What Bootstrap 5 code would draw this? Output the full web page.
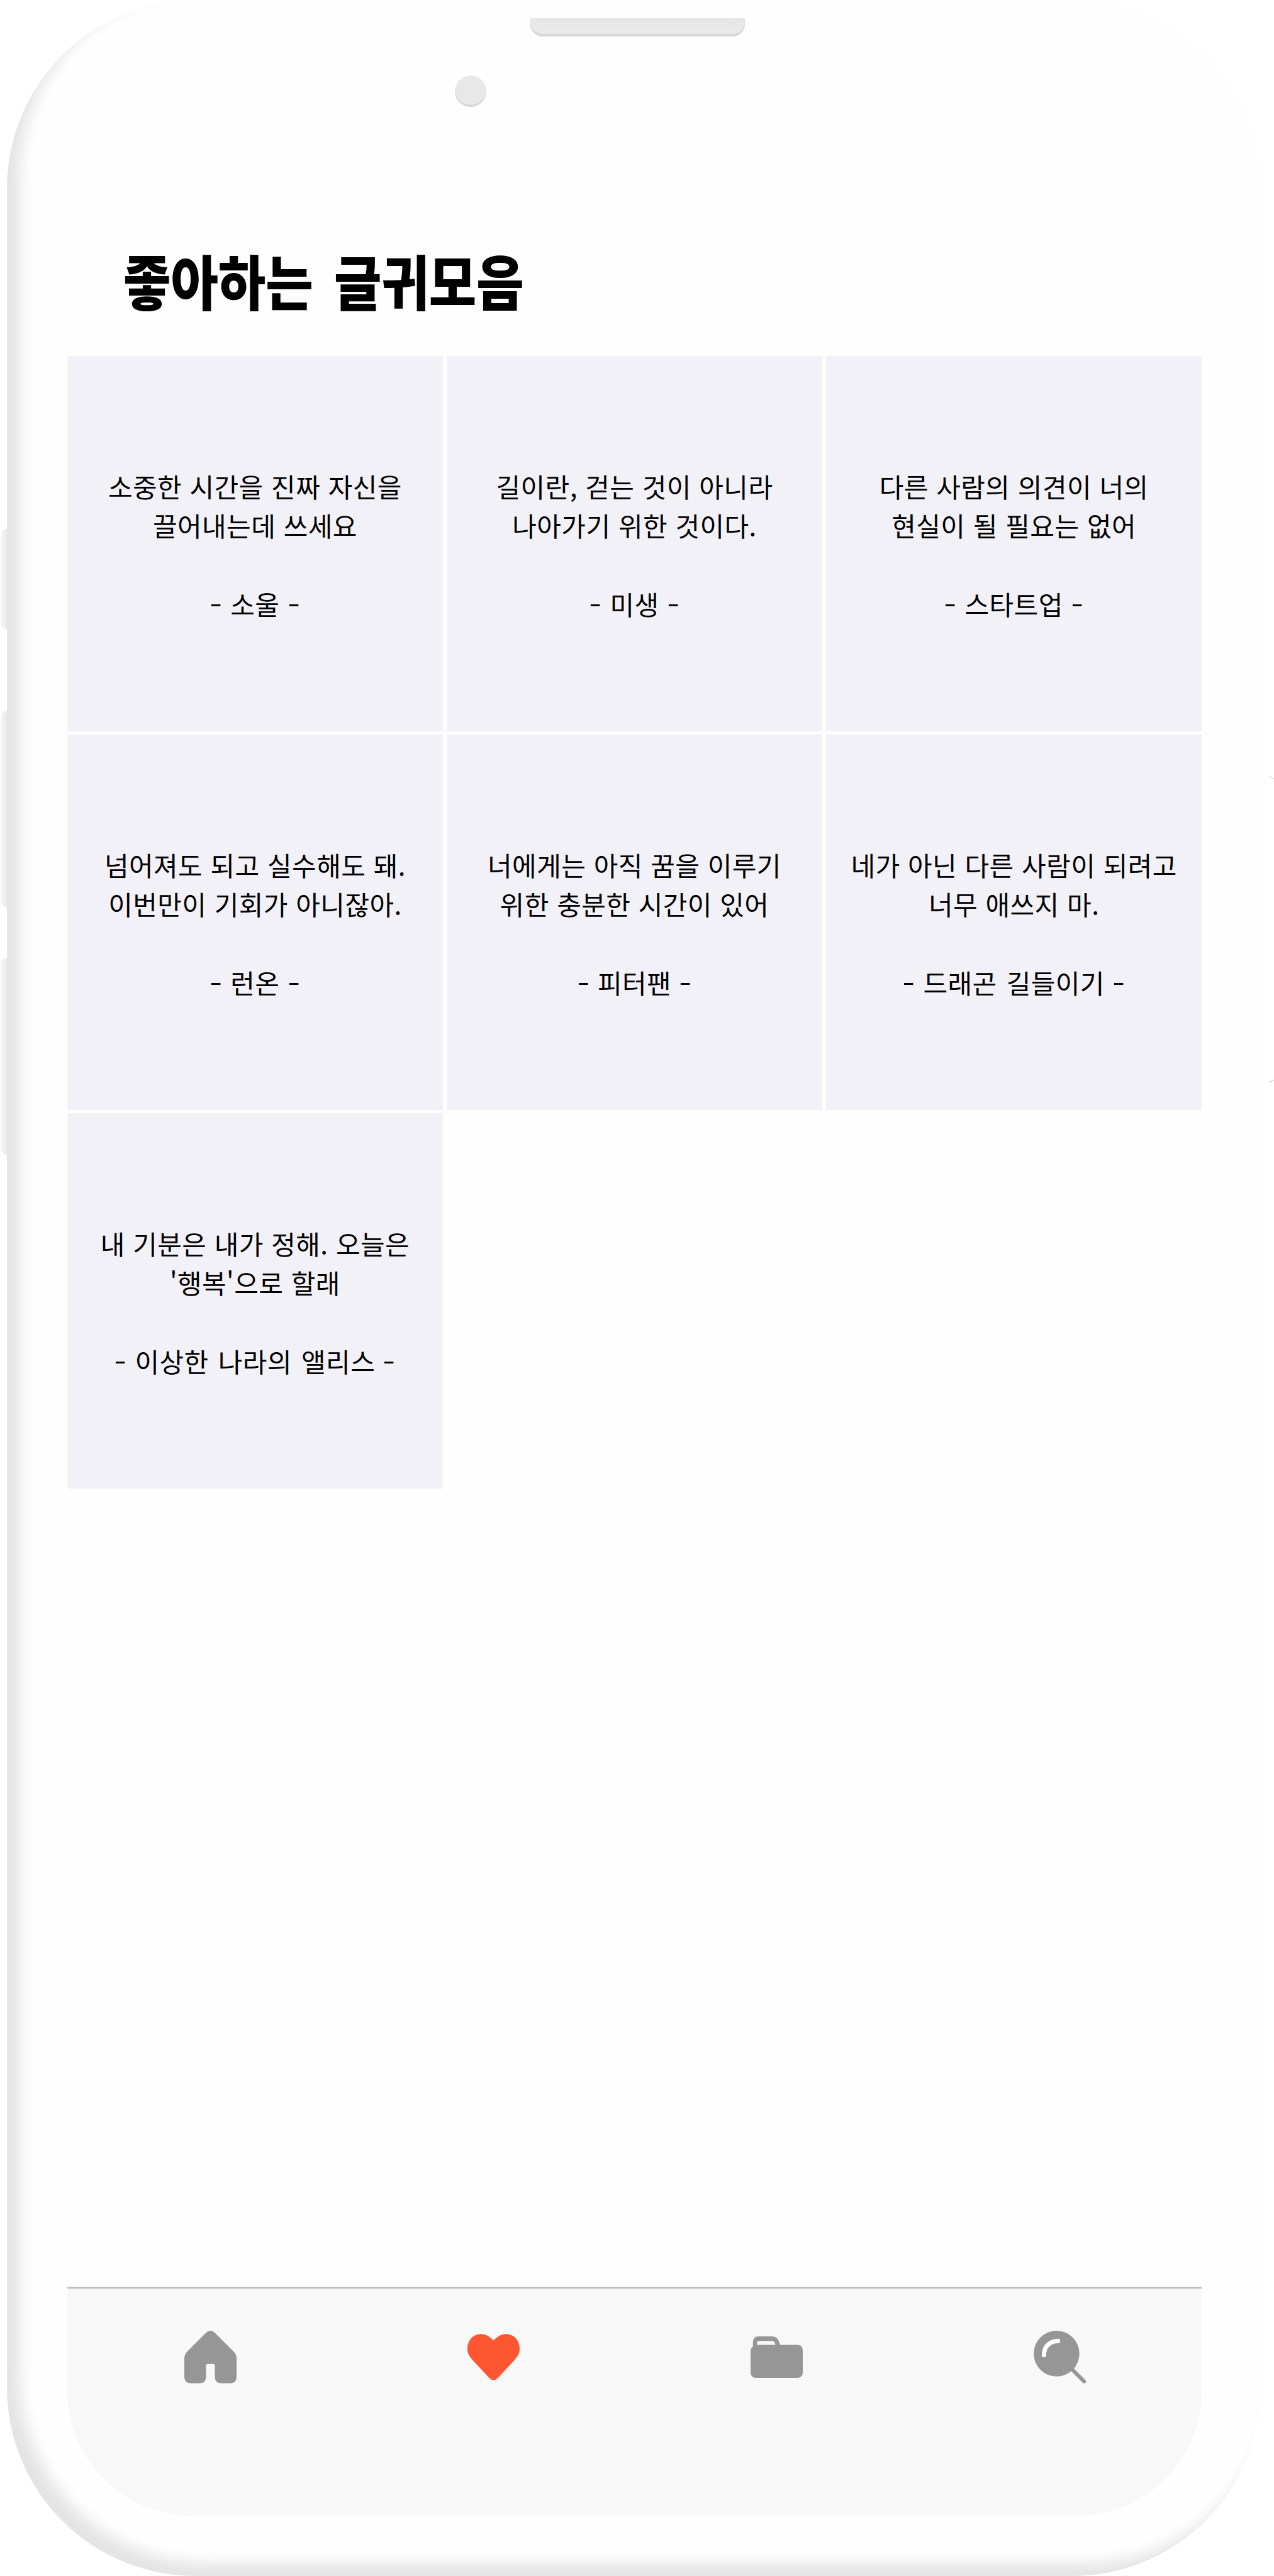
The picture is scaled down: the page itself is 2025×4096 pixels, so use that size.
<!DOCTYPE html>
<html lang="ko">
<head>
<meta charset="utf-8">
<meta name="viewport" content="width=device-width, initial-scale=1">
<title>좋아하는 글귀모음</title>
<link rel="stylesheet" href="https://cdn.jsdelivr.net/npm/bootstrap@5.3.0/dist/css/bootstrap.min.css">
<style>
  body { width: 2025px; height: 4096px; overflow: hidden; background: #fff; color: #000; font-family: "Noto Sans CJK KR", sans-serif; }
  .stage { width: 2025px; height: 4096px; padding-left: 11px; }
  .phone { width: 1993px; height: 4096px; padding: 98px 94px 96px 96px; border-radius: 300px; background: #fefefe;
           box-shadow: inset 20px -20px 22px #e4e4e4; }
  .screen { height: 3902px; border-radius: 0 0 198px 198px; background: #fefefe; }
  .side-key { left: 1px; width: 10px; border-radius: 10px 0 0 10px / 9px 0 0 9px; background: linear-gradient(90deg, #f6f6f6, #e9e9e9); }
  .key-a { top: 841px; height: 159px; }
  .key-b { top: 1130px; height: 312px; }
  .key-c { top: 1523px; height: 313px; }
  .power-key { left: 2017px; top: 1234px; width: 8px; height: 488px; }
  .speaker { left: 843px; top: 29px; width: 341px; height: 29px; border-radius: 0 0 20px 20px; background: linear-gradient(#e6e6e6, #ebebeb); box-shadow: inset 0 -4px 2px #d7d7d7; }
  .camera { left: 723px; top: 120px; width: 50px; height: 50px; background: #e8e8e8; box-shadow: inset 0 -3px 1px #d6d6d6; }
  .top-area { height: 468px; padding: 280px 0 0 89px; }
  .page-title { font-size: 95px; line-height: 134px; font-weight: 900; word-spacing: 12px; transform: scaleX(.863); transform-origin: left; }
  .quotes { display: grid; grid-template-columns: repeat(3, 1fr); grid-auto-rows: 597px; column-gap: 6.4px; row-gap: 5px; }
  .quote { background: #f2f1f7; font-size: 42px; line-height: 62.5px; letter-spacing: .4px; padding-top: 4px; }
  .quote-text { word-spacing: .3px; margin-bottom: 62.5px; }
  .quote-source { word-spacing: 3px; }
  .dash { display: inline-block; transform: scaleX(1.35); }
  .tabs { height: 364px; border-top: 3px solid #c0c0c0; background: #f8f8f8; border-radius: 0 0 198px 198px; padding: 67px 0 0 2px; color: #969696; }
  .tabs svg { width: 83px; height: 83px; overflow: visible; }
  .tab-on { color: #fd5631; }
</style>
<script src="https://cdn.jsdelivr.net/npm/bootstrap@5.3.0/dist/js/bootstrap.bundle.min.js"></script>
</head>
<body>
<div class="stage position-relative">
  <i class="side-key key-a position-absolute"></i>
  <i class="side-key key-b position-absolute"></i>
  <i class="side-key key-c position-absolute"></i>
  <svg class="power-key position-absolute" viewBox="0 0 8 488" fill="none" stroke="#b5b5b5" stroke-width=".8"><path d="M0 1Q4 1 8 5M0 486Q4 486 8 483"/></svg>
  <div class="phone">
    <i class="speaker position-absolute"></i>
    <i class="camera position-absolute rounded-circle"></i>
    <div class="screen d-flex flex-column">
      <header class="top-area">
        <h1 class="page-title m-0 text-nowrap">좋아하는 글귀모음</h1>
      </header>
      <main class="quotes text-center text-nowrap">
        <div class="quote d-flex flex-column justify-content-center"><div class="quote-text">소중한 시간을 진짜 자신을<br>끌어내는데 쓰세요</div><div class="quote-source"><span class="dash">-</span> 소울 <span class="dash">-</span></div></div>
        <div class="quote d-flex flex-column justify-content-center"><div class="quote-text">길이란, 걷는 것이 아니라<br>나아가기 위한 것이다.</div><div class="quote-source"><span class="dash">-</span> 미생 <span class="dash">-</span></div></div>
        <div class="quote d-flex flex-column justify-content-center"><div class="quote-text">다른 사람의 의견이 너의<br>현실이 될 필요는 없어</div><div class="quote-source"><span class="dash">-</span> 스타트업 <span class="dash">-</span></div></div>
        <div class="quote d-flex flex-column justify-content-center"><div class="quote-text">넘어져도 되고 실수해도 돼.<br>이번만이 기회가 아니잖아.</div><div class="quote-source"><span class="dash">-</span> 런온 <span class="dash">-</span></div></div>
        <div class="quote d-flex flex-column justify-content-center"><div class="quote-text">너에게는 아직 꿈을 이루기<br>위한 충분한 시간이 있어</div><div class="quote-source"><span class="dash">-</span> 피터팬 <span class="dash">-</span></div></div>
        <div class="quote d-flex flex-column justify-content-center"><div class="quote-text">네가 아닌 다른 사람이 되려고<br>너무 애쓰지 마.</div><div class="quote-source"><span class="dash">-</span> 드래곤 길들이기 <span class="dash">-</span></div></div>
        <div class="quote d-flex flex-column justify-content-center"><div class="quote-text">내 기분은 내가 정해. 오늘은<br>'행복'으로 할래</div><div class="quote-source"><span class="dash">-</span> 이상한 나라의 앨리스 <span class="dash">-</span></div></div>
      </main>
      <nav class="tabs mt-auto d-flex align-items-start text-center">
        <a class="flex-fill text-reset"><svg class="d-block mx-auto" viewBox="0 0 89 89" fill="currentColor"><path d="M37 3.5Q44.500-3.500 52 3.500L84.500 36Q89 41 89 47V78Q89 89.500 78 89.500H63Q52 89.500 52 78V59.500Q52 56.500 49 56.500H40Q37 56.500 37 59.500V78Q37 89.500 26 89.500H11Q0 89.500 0 78V47Q0 41 4.500 36Z"/></svg></a>
        <a class="flex-fill tab-on"><svg class="d-block mx-auto" viewBox="0 0 89 89" fill="currentColor"><path d="M44.500 17C38 9.500 31 5.700 23.500 5.700C10 5.700 0 16 0 31C0 38 3 43 8 49L37 80.500Q44.500 88 52 80.500L81 49C86 43 89 38 89 31C89 16 79 5.700 65.500 5.700C58 5.700 51 9.500 44.500 17Z"/></svg></a>
        <a class="flex-fill text-reset"><svg class="d-block mx-auto" viewBox="0 0 89 89" fill="currentColor"><path fill-rule="evenodd" d="M4 27V20Q4 9.700 14 9.700H36Q43 9.700 46 14Q48 17 50.500 24H79Q89 24 89 34V70Q89 80.500 79 80.500H10Q0 80.500 0 70V34Q0 30 4 27ZM11 24H42.500L41 20Q40 17.300 37 17.300H14Q11 17.300 11 20Z"/></svg></a>
        <a class="flex-fill text-reset"><svg class="d-block mx-auto" viewBox="0 0 89 89" fill="none" stroke-linecap="round"><circle cx="39" cy="39" r="39" fill="currentColor"/><path d="M66 66.500L86 86.500" stroke="currentColor" stroke-width="6.500"/><path d="M17.500 41.500C17.500 27 27 18 41.500 17.500" stroke="#fff" stroke-width="7.500"/></svg></a>
      </nav>
    </div>
  </div>
</div>
</body>
</html>
